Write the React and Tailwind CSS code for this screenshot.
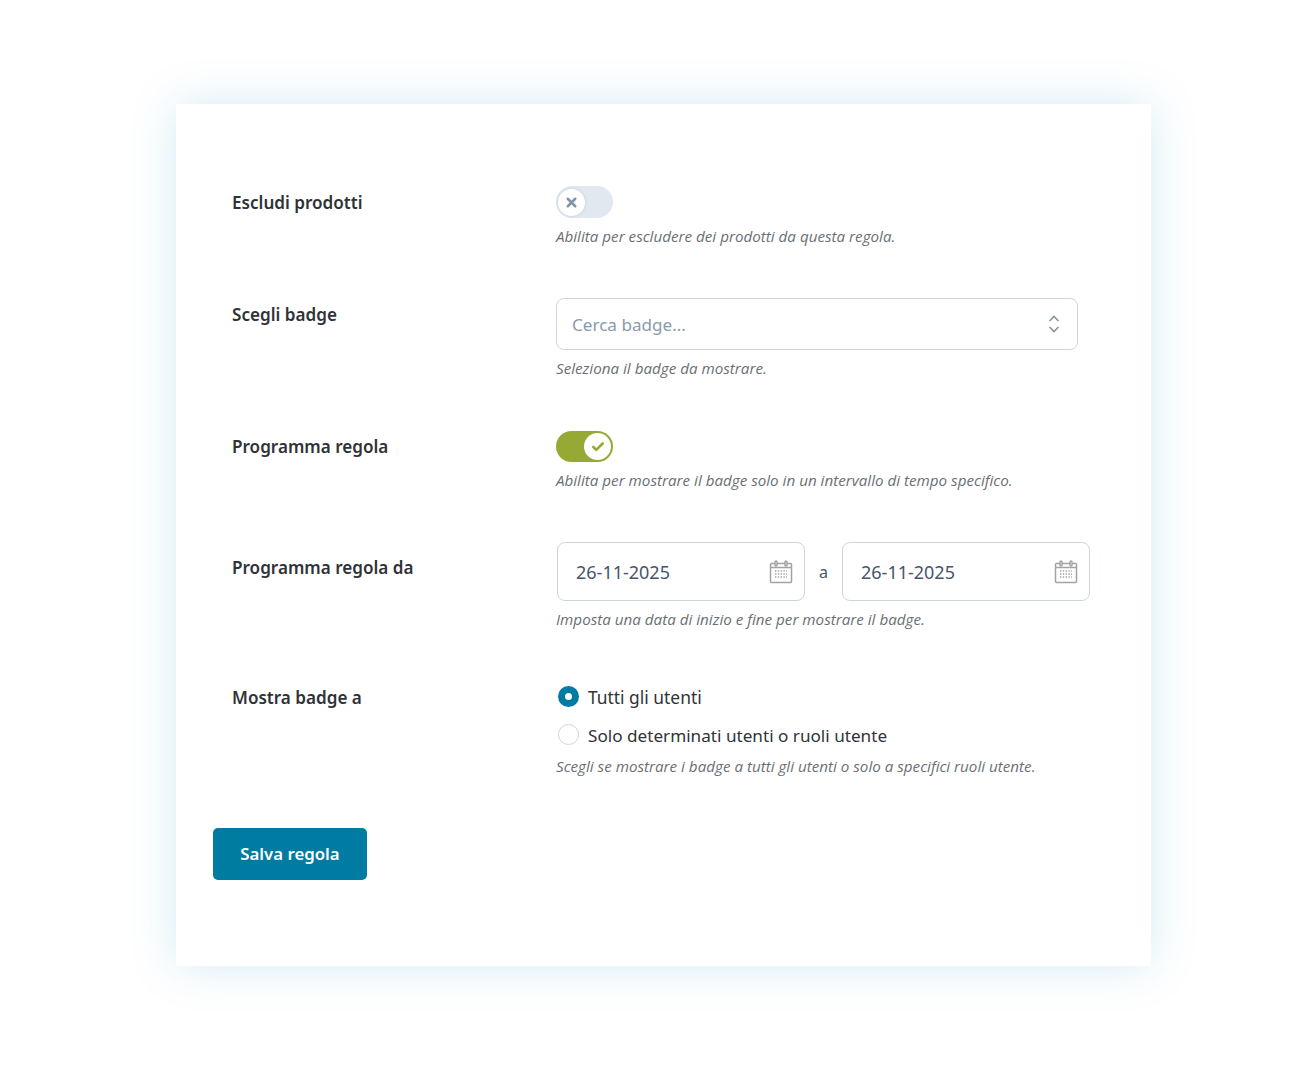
import { Check, X } from 'lucide-react'

function Desc({ children }) {
  return <p className="h-5 font-['Open_Sans',sans-serif] text-[15.2px] leading-5 italic text-[#6b6f75]">{children}</p>
}

function Label({ children, className }) {
  return <div className={`w-[343px] shrink-0 pl-[19px] text-[17.1px] font-semibold leading-6 text-[#2f3338] ${className}`}>{children}</div>
}

function Toggle({ on }) {
  if (on) {
    return (
      <div className="flex h-[31px] w-[57px] items-center justify-end rounded-full bg-[#95a934] pr-[2px]">
        <div className="flex h-[27px] w-[27px] items-center justify-center rounded-full bg-white">
          <Check size={14} strokeWidth={4.5} className="text-[#95a934]" />
        </div>
      </div>
    )
  }
  return (
    <div className="flex h-8 w-[57px] items-center rounded-full bg-[#e2e8f0] pl-[2px]">
      <div className="flex h-[27px] w-[27px] items-center justify-center rounded-full bg-white shadow-[0_0_3px_rgba(100,116,139,0.25)]">
        <X size={15} strokeWidth={4} className="text-[#7f92a6]" />
      </div>
    </div>
  )
}

function SortIcon() {
  return (
    <svg width="12" height="20" viewBox="0 0 12 20" fill="none" stroke="#8795a8" strokeWidth="1.7">
      <path d="M1.5 7 6 2.5 10.5 7" />
      <path d="M1.5 13 6 17.5 10.5 13" />
    </svg>
  )
}

function CalendarIcon() {
  return (
    <svg width="24" height="24" viewBox="0 0 24 24" fill="none" stroke="#a3a3a3" strokeWidth="1.5">
      <rect x="1.5" y="3.5" width="21" height="19" rx="1" />
      <path d="M1.5 7.5h21" />
      <rect x="6" y="1" width="2" height="5" rx="1" fill="#fff" />
      <rect x="16" y="1" width="2" height="5" rx="1" fill="#fff" />
      <path d="M6 11h12M6 14h12M6 17h12" strokeDasharray="1.4 1.4" strokeWidth="1.3" />
    </svg>
  )
}

function DateInput() {
  return (
    <div className="flex h-[59px] w-[248px] items-center justify-between rounded-lg border border-[#cbd5e1] bg-white pl-[18px] pr-[11px]">
      <span className="pt-[2px] text-[18px] text-[#475569]">26-11-2025</span>
      <CalendarIcon />
    </div>
  )
}

export default function App() {
  return (
    <div className="min-h-[1069px] bg-white pl-[176px] pt-[104px] font-['Noto_Sans',sans-serif]">
      <div className="h-[862px] w-[975px] bg-white px-[37px] pt-[82px] shadow-[0_0_44px_rgba(0,140,190,0.17)]">
        <div className="mb-[52px] flex">
          <Label className="pt-[5px]">Escludi prodotti</Label>
          <div className="flex flex-col gap-[8px]">
            <Toggle />
            <Desc>Abilita per escludere dei prodotti da questa regola.</Desc>
          </div>
        </div>

        <div className="mb-[53px] flex">
          <Label className="pt-[5px]">Scegli badge</Label>
          <div className="flex flex-col gap-[8px]">
            <div className="flex h-[52px] w-[522px] items-center justify-between rounded-lg border border-[#cbd5e1] bg-white pl-[15px] pr-[17px]">
              <span className="pt-[2px] text-[17.1px] text-[#8a9bad]">Cerca badge...</span>
              <SortIcon />
            </div>
            <Desc>Seleziona il badge da mostrare.</Desc>
          </div>
        </div>

        <div className="mb-[52px] flex">
          <Label className="pt-[4px]">Programma regola</Label>
          <div className="flex flex-col gap-[8px]">
            <Toggle on />
            <Desc>Abilita per mostrare il badge solo in un intervallo di tempo specifico.</Desc>
          </div>
        </div>

        <div className="mb-[56px] flex">
          <Label className="pt-[14px]">Programma regola da</Label>
          <div className="flex flex-col gap-[8px]">
            <div className="ml-px flex items-center">
              <DateInput />
              <span className="w-[37px] text-center text-[16px] text-[#475569]">a</span>
              <DateInput />
            </div>
            <Desc>Imposta una data di inizio e fine per mostrare il badge.</Desc>
          </div>
        </div>

        <div className="flex">
          <Label className="pt-px">Mostra badge a</Label>
          <div className="flex flex-col">
            <div className="flex h-6 items-center gap-[9px] pl-[2px]">
              <div className="mb-[2px] flex h-[21px] w-[21px] items-center justify-center rounded-full bg-[#007ba1]">
                <div className="h-[7px] w-[7px] rounded-full bg-white" />
              </div>
              <span className="text-[17.4px] text-[#2f3338]">Tutti gli utenti</span>
            </div>
            <div className="mt-[14px] flex h-6 items-center gap-[9px] pl-[2px]">
              <div className="mb-[2px] h-[21px] w-[21px] rounded-full border border-[#cbd5e1] bg-white" />
              <span className="pt-[2px] text-[17.15px] text-[#2f3338]">Solo determinati utenti o ruoli utente</span>
            </div>
            <div className="mt-[9px]">
              <Desc>Scegli se mostrare i badge a tutti gli utenti o solo a specifici ruoli utente.</Desc>
            </div>
          </div>
        </div>

        <button className="mt-[52px] h-[52px] w-[154px] rounded-[5px] bg-[#007ba1] text-[16.8px] font-semibold text-white">
          Salva regola
        </button>
      </div>
    </div>
  )
}
